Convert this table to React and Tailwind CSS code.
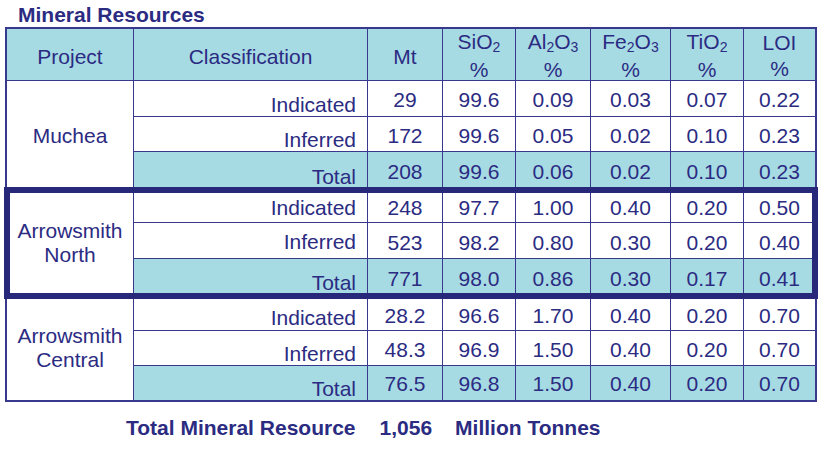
const groups = [
  {
    name: ['Muchea'],
    rowsH: 'grid-rows-[36px_35px_38px]',
    rows: [
      { pb: 'pb-0', pt: 'pt-[2px]', cells: ['Indicated', '29', '99.6', '0.09', '0.03', '0.07', '0.22'] },
      { pb: 'pb-0', pt: 'pt-[2px]', cells: ['Inferred', '172', '99.6', '0.05', '0.02', '0.10', '0.23'] },
      { pb: 'pb-[2px]', pt: 'pt-0', cells: ['Total', '208', '99.6', '0.06', '0.02', '0.10', '0.23'] },
    ],
  },
  {
    name: ['Arrowsmith', 'North'],
    boxed: true,
    rowsH: 'grid-rows-[33px_36px_37px]',
    rows: [
      { pb: 'pb-[3px]', pt: 'pt-[3px]', cells: ['Indicated', '248', '97.7', '1.00', '0.40', '0.20', '0.50'] },
      { pb: 'pb-[5px]', pt: 'pt-[4px]', cells: ['Inferred', '523', '98.2', '0.80', '0.30', '0.20', '0.40'] },
      { pb: 'pb-[2px]', pt: 'pt-[1px]', cells: ['Total', '771', '98.0', '0.86', '0.30', '0.17', '0.41'] },
    ],
  },
  {
    name: ['Arrowsmith', 'Central'],
    rowsH: 'grid-rows-[35px_35px_34px]',
    rows: [
      { pb: 'pb-[1px]', pt: 'pt-[4px]', cells: ['Indicated', '28.2', '96.6', '1.70', '0.40', '0.20', '0.70'] },
      { pb: 'pb-0', pt: 'pt-[3px]', cells: ['Inferred', '48.3', '96.9', '1.50', '0.40', '0.20', '0.70'] },
      { pb: 'pb-0', pt: 'pt-[1px]', cells: ['Total', '76.5', '96.8', '1.50', '0.40', '0.20', '0.70'] },
    ],
  },
];

const COLS = 'grid-cols-[127px_234px_75px_73px_75px_80px_73px_71px]';
const LINE = 'border-[#38388c]';

const Sub = ({ children }) => (
  <span className="text-[14px] relative top-[3px]">{children}</span>
);

const headers = [
  <>SiO<Sub>2</Sub></>,
  <>Al<Sub>2</Sub>O<Sub>3</Sub></>,
  <>Fe<Sub>2</Sub>O<Sub>3</Sub></>,
  <>TiO<Sub>2</Sub></>,
  <>LOI</>,
];

const Group = ({ g }) => (
  <div
    className={`grid ${COLS} ${g.rowsH} bg-white${
      g.boxed ? ' relative z-10 outline-solid outline-[6px] outline-[#28287a] outline-offset-[-3px]' : ''
    }`}
  >
    <div className={`row-span-3 border-r ${LINE} flex flex-col items-center justify-center leading-[24px]`}>
      {g.name.map((n) => (
        <div key={n}>{n}</div>
      ))}
    </div>
    {g.rows.map((row, ri) => {
      const total = row.cells[0] === 'Total';
      const bg = total ? 'bg-[#a7dbe4]' : '';
      const bottom = ri < 2 ? `border-b ${LINE}` : '';
      return row.cells.map((cell, ci) => {
        const right = ci < 6 ? `border-r ${LINE}` : '';
        return ci === 0 ? (
          <div
            key={ri + '-' + ci}
            className={`flex items-end justify-end pr-[11px] ${row.pb} ${bg} ${bottom} ${right}`}
          >
            {cell}
          </div>
        ) : (
          <div
            key={ri + '-' + ci}
            className={`flex items-center justify-center ${row.pt} ${bg} ${bottom} ${right}`}
          >
            {cell}
          </div>
        );
      });
    })}
  </div>
);

const App = () => {
  return (
    <div
      className="w-[828px] h-[455px] bg-white text-[#2b2b82]"
      style={{ fontFamily: '"Liberation Sans", Arial, sans-serif' }}
    >
      <div className="pt-[4px] pl-[18px] h-[27px] text-[21px] leading-[22px] font-bold">
        Mineral Resources
      </div>
      <div className={`ml-[5px] w-[812px] border-2 ${LINE} text-[21px] leading-[23px]`}>
        <div className={`grid ${COLS} h-[52px] bg-[#a7dbe4] border-b ${LINE}`}>
          <div className={`flex items-center justify-center border-r ${LINE}`}>Project</div>
          <div className={`flex items-center justify-center border-r ${LINE}`}>Classification</div>
          <div className={`flex items-center justify-center border-r ${LINE}`}>Mt</div>
          {headers.map((h, i) => (
            <div
              key={i}
              className={`flex flex-col items-center justify-center leading-[26px] ${i < 4 ? `border-r ${LINE}` : ''}`}
            >
              <div>{h}</div>
              <div>%</div>
            </div>
          ))}
        </div>
        {groups.map((g) => (
          <Group key={g.name.join(' ')} g={g} />
        ))}
      </div>
      <div className="flex pl-[126px] mt-[14px] text-[21px] leading-[24px] font-bold">
        <span>Total Mineral Resource</span>
        <span className="ml-[24px]">1,056</span>
        <span className="ml-[23px]">Million Tonnes</span>
      </div>
    </div>
  );
};

export default App;
